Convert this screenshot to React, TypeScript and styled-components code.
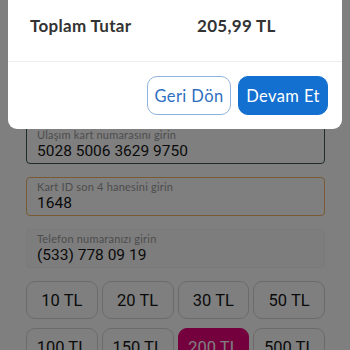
import styled, { createGlobalStyle } from "styled-components";

const GlobalStyle = createGlobalStyle`
  html, body {
    margin: 0;
    padding: 0;
    background: #ffffff;
    font-family: "Lato", "Liberation Sans", sans-serif;
  }
  * {
    box-sizing: border-box;
  }
`;

const Page = styled.div`
  position: relative;
  width: 350px;
  height: 350px;
  overflow: hidden;
  background: #ffffff;
`;

const Form = styled.div`
  display: flex;
  flex-direction: column;
  gap: 13px;
  padding: 125px 25px 0 26px;
`;

const Field = styled.div<{ $border: string; $bg?: string }>`
  display: flex;
  flex-direction: column;
  height: 39px;
  padding: 2px 10px 0 10px;
  border: 1px solid ${(p) => p.$border};
  border-radius: 4px;
  background: ${(p) => p.$bg || "#ffffff"};
`;

const FieldLabel = styled.div`
  font-size: 11px;
  color: #9a9a9a;
  line-height: 13px;
  letter-spacing: 0.2px;
  white-space: nowrap;
`;

const FieldValue = styled.div`
  font-family: "Roboto", "Liberation Sans", sans-serif;
  font-size: 15.5px;
  color: #151515;
  line-height: 20px;
`;

const Amounts = styled.div`
  display: grid;
  grid-template-columns: repeat(4, 1fr);
  gap: 9px 4px;
`;

const Amount = styled.div<{ $active?: boolean }>`
  display: flex;
  align-items: center;
  justify-content: center;
  height: 38px;
  border-radius: 9px;
  border: 1px solid ${(p) => (p.$active ? "#e8007d" : "#d6d6d6")};
  background: ${(p) => (p.$active ? "#e8007d" : "#ffffff")};
  color: ${(p) => (p.$active ? "#ffffff" : "#151515")};
  font-family: "Roboto", "Liberation Sans", sans-serif;
  font-size: 16.5px;
`;

const Overlay = styled.div`
  position: absolute;
  inset: 0;
  background: rgba(0, 0, 0, 0.5);
`;

const Modal = styled.div`
  position: absolute;
  left: 8px;
  right: 8px;
  top: -30px;
  background: #ffffff;
  border-radius: 9px;
  display: flex;
  flex-direction: column;
`;

const TotalRow = styled.div`
  display: flex;
  align-items: center;
  height: 92px;
  padding: 20px 0 0 22px;
  border-bottom: 1px solid #ececec;
  font-size: 17px;
  font-weight: 700;
  color: #333333;
  letter-spacing: 0.3px;
`;

const TotalLabel = styled.div`
  width: 167px;
`;

const Actions = styled.div`
  display: flex;
  justify-content: flex-end;
  gap: 7px;
  padding: 14px 14px 14px 0;
`;

const Button = styled.div<{ $primary?: boolean }>`
  display: flex;
  align-items: center;
  justify-content: center;
  height: 39px;
  width: ${(p) => (p.$primary ? "90px" : "84px")};
  border-radius: 10px;
  border: 1px solid ${(p) => (p.$primary ? "#1370d0" : "#8fb3dc")};
  background: ${(p) => (p.$primary ? "#1370d0" : "#ffffff")};
  color: ${(p) => (p.$primary ? "#ffffff" : "#2f6fbf")};
  font-size: 16.5px;
  letter-spacing: 0.4px;
`;

const amounts = ["10 TL", "20 TL", "30 TL", "50 TL", "100 TL", "150 TL", "200 TL", "500 TL"];

export default function App() {
  return (
    <Page>
      <GlobalStyle />
      <Form>
        <Field $border="#3c5a55">
          <FieldLabel>Ulaşım kart numarasını girin</FieldLabel>
          <FieldValue>5028 5006 3629 9750</FieldValue>
        </Field>
        <Field $border="#f0b46a">
          <FieldLabel>Kart ID son 4 hanesini girin</FieldLabel>
          <FieldValue>1648</FieldValue>
        </Field>
        <Field $border="#f4f4f4" $bg="#fafafa">
          <FieldLabel>Telefon numaranızı girin</FieldLabel>
          <FieldValue>(533) 778 09 19</FieldValue>
        </Field>
        <Amounts>
          {amounts.map((a) => (
            <Amount key={a} $active={a === "200 TL"}>
              {a}
            </Amount>
          ))}
        </Amounts>
      </Form>
      <Overlay />
      <Modal>
        <TotalRow>
          <TotalLabel>Toplam Tutar</TotalLabel>
          <div>205,99 TL</div>
        </TotalRow>
        <Actions>
          <Button>Geri Dön</Button>
          <Button $primary>Devam Et</Button>
        </Actions>
      </Modal>
    </Page>
  );
}
